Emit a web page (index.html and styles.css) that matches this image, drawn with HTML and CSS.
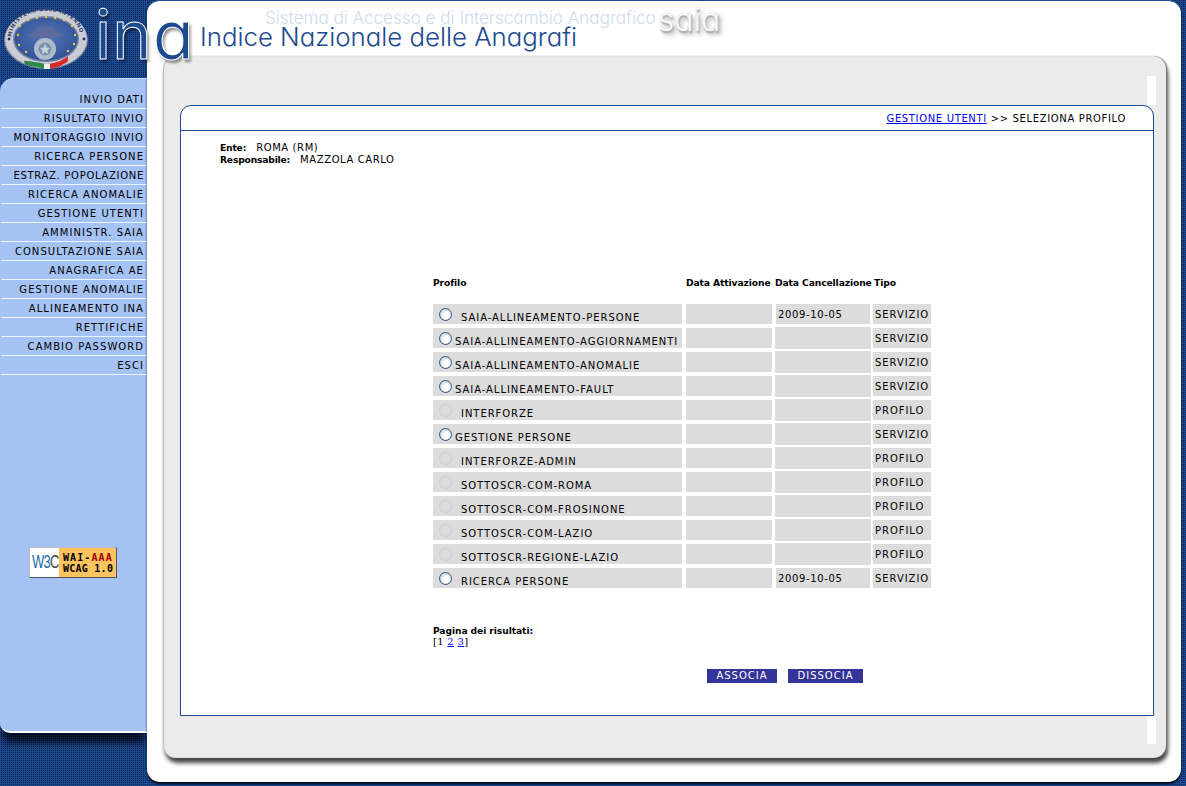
FILE: index.html
```html
<!DOCTYPE html>
<html lang="it">
<head>
<meta charset="utf-8">
<title>Indice Nazionale delle Anagrafi</title>
<link rel="stylesheet" href="styles.css">
</head>
<body>
<div class="page">
  <aside class="side">
    <nav class="menu">
      <a href="#">INVIO DATI</a>
      <a href="#">RISULTATO INVIO</a>
      <a href="#">MONITORAGGIO INVIO</a>
      <a href="#">RICERCA PERSONE</a>
      <a href="#" class="tight">ESTRAZ. POPOLAZIONE</a>
      <a href="#">RICERCA ANOMALIE</a>
      <a href="#">GESTIONE UTENTI</a>
      <a href="#">AMMINISTR. SAIA</a>
      <a href="#">CONSULTAZIONE SAIA</a>
      <a href="#">ANAGRAFICA AE</a>
      <a href="#">GESTIONE ANOMALIE</a>
      <a href="#">ALLINEAMENTO INA</a>
      <a href="#">RETTIFICHE</a>
      <a href="#">CAMBIO PASSWORD</a>
      <a href="#">ESCI</a>
    </nav>
    <div class="badge">
      <span class="badge-w3c"><span class="badge-mark">W3<i>C</i></span></span>
      <span class="badge-txt"><span class="l1">WAI-<b>AAA</b></span><span class="l2">WCAG 1.0</span></span>
    </div>
  </aside>
  <main class="panel">
    <header class="head">
      <div class="subtitle">Sistema di Accesso e di Interscambio Anagrafico<span class="saia">saia</span></div>
      <div class="title">Indice Nazionale delle Anagrafi</div>
    </header>
    <div class="grey">
      <div class="strip"></div>
      <div class="card-wrap">
        <section class="card">
          <div class="crumb"><a href="#">GESTIONE UTENTI</a> &gt;&gt; SELEZIONA PROFILO</div>
          <div class="info">
            <div><b>Ente:</b><span>ROMA (RM)</span></div>
            <div><b>Responsabile:</b><span>MAZZOLA CARLO</span></div>
          </div>
          <table class="tbl">
            <colgroup><col class="c1"><col class="c2"><col class="c3"><col class="c4"></colgroup>
            <thead>
              <tr><th>Profilo</th><th>Data Attivazione</th><th class="thc">Data Cancellazione</th><th>Tipo</th></tr>
            </thead>
            <tbody>
              <tr><td><div class="cell name wide"><input type="radio" name="p"><span>SAIA-ALLINEAMENTO-PERSONE</span></div></td><td><div class="cell"></div></td><td><div class="cell date">2009-10-05</div></td><td><div class="cell tipo">SERVIZIO</div></td></tr>
              <tr><td><div class="cell name"><input type="radio" name="p"><span>SAIA-ALLINEAMENTO-AGGIORNAMENTI</span></div></td><td><div class="cell"></div></td><td><div class="cell empty"></div></td><td><div class="cell tipo">SERVIZIO</div></td></tr>
              <tr><td><div class="cell name"><input type="radio" name="p"><span>SAIA-ALLINEAMENTO-ANOMALIE</span></div></td><td><div class="cell"></div></td><td><div class="cell empty"></div></td><td><div class="cell tipo">SERVIZIO</div></td></tr>
              <tr><td><div class="cell name"><input type="radio" name="p"><span>SAIA-ALLINEAMENTO-FAULT</span></div></td><td><div class="cell"></div></td><td><div class="cell empty"></div></td><td><div class="cell tipo">SERVIZIO</div></td></tr>
              <tr><td><div class="cell name wide"><input type="radio" name="p" disabled><span>INTERFORZE</span></div></td><td><div class="cell"></div></td><td><div class="cell empty"></div></td><td><div class="cell tipo">PROFILO</div></td></tr>
              <tr><td><div class="cell name"><input type="radio" name="p"><span>GESTIONE PERSONE</span></div></td><td><div class="cell"></div></td><td><div class="cell empty"></div></td><td><div class="cell tipo">SERVIZIO</div></td></tr>
              <tr><td><div class="cell name wide"><input type="radio" name="p" disabled><span>INTERFORZE-ADMIN</span></div></td><td><div class="cell"></div></td><td><div class="cell empty"></div></td><td><div class="cell tipo">PROFILO</div></td></tr>
              <tr><td><div class="cell name wide"><input type="radio" name="p" disabled><span>SOTTOSCR-COM-ROMA</span></div></td><td><div class="cell"></div></td><td><div class="cell empty"></div></td><td><div class="cell tipo">PROFILO</div></td></tr>
              <tr><td><div class="cell name wide"><input type="radio" name="p" disabled><span>SOTTOSCR-COM-FROSINONE</span></div></td><td><div class="cell"></div></td><td><div class="cell empty"></div></td><td><div class="cell tipo">PROFILO</div></td></tr>
              <tr><td><div class="cell name wide"><input type="radio" name="p" disabled><span>SOTTOSCR-COM-LAZIO</span></div></td><td><div class="cell"></div></td><td><div class="cell empty"></div></td><td><div class="cell tipo">PROFILO</div></td></tr>
              <tr><td><div class="cell name wide"><input type="radio" name="p" disabled><span>SOTTOSCR-REGIONE-LAZIO</span></div></td><td><div class="cell"></div></td><td><div class="cell empty"></div></td><td><div class="cell tipo">PROFILO</div></td></tr>
              <tr><td><div class="cell name wide"><input type="radio" name="p"><span>RICERCA PERSONE</span></div></td><td><div class="cell"></div></td><td><div class="cell date">2009-10-05</div></td><td><div class="cell tipo">SERVIZIO</div></td></tr>
            </tbody>
          </table>
          <div class="pager">
            <b>Pagina dei risultati:</b>
            <div class="pages">[1 <a href="#">2</a> <a href="#">3</a>]</div>
          </div>
          <div class="actions">
            <button type="button" class="btn assoc">ASSOCIA</button>
            <button type="button" class="btn dissoc">DISSOCIA</button>
          </div>
        </section>
      </div>
    </div>
  </main>
  <div class="logo">
    <svg class="emblem" width="86" height="70" viewBox="0 0 86 70" aria-hidden="true">
      <defs>
        <path id="ring" d="M7 36 C8 16 24 7 42 7 C60 7 76 16 77 36"/>
        <radialGradient id="field" cx="50%" cy="45%" r="60%">
          <stop offset="0" stop-color="#5577b5"/><stop offset="1" stop-color="#2f4f96"/>
        </radialGradient>
      </defs>
      <ellipse cx="42" cy="36" rx="42" ry="29" fill="#7f87a0"/>
      <ellipse cx="42" cy="35" rx="41" ry="29" fill="#c9ccd4"/>
      <ellipse cx="42" cy="35" rx="33" ry="23" fill="#6f7da3"/>
      <ellipse cx="42" cy="35" rx="31.5" ry="21.5" fill="url(#field)"/>
      <text class="ring-text"><textPath href="#ring" startOffset="3">MINISTERO DELL'INTERNO</textPath></text>
      <path d="M24 31 L32 27 L34 23 L48 22 L51 27 L59 31 L52 34 L31 34Z" fill="#5c6b9e"/>
      <circle cx="41" cy="45" r="11" fill="#aebccb"/>
      <circle cx="41" cy="45" r="6.5" fill="#7d93ad"/>
      <path d="M41 40 l1.5 3.5 3.5 .4 -2.6 2.4 .8 3.6 -3.2 -1.9 -3.2 1.9 .8 -3.6 -2.6 -2.4 3.5 -.4Z" fill="#c6d3dc"/>
      <g fill="#e8c93a">
        <circle cx="14" cy="31" r="1.2"/><circle cx="16" cy="22" r="1.2"/><circle cx="24" cy="16" r="1.2"/>
        <circle cx="33" cy="14" r="1.2"/><circle cx="42" cy="13" r="1.2"/><circle cx="51" cy="14" r="1.2"/>
        <circle cx="60" cy="16" r="1.2"/><circle cx="68" cy="22" r="1.2"/><circle cx="71" cy="31" r="1.2"/>
        <circle cx="70" cy="40" r="1.2"/><circle cx="15" cy="41" r="1.2"/><circle cx="22" cy="48" r="1.2"/><circle cx="64" cy="47" r="1.2"/>
      </g>
      <g fill="#1d2f6e"><circle cx="5" cy="35" r="1.4"/><circle cx="80" cy="35" r="1.4"/></g>
      <path d="M20 57 C28 57 36 59 41 60 L42 65 C34 63 26 62 21 61Z" fill="#2f8a4a"/>
      <path d="M44 60 C52 59 60 56 64 52 L64 57 C60 61 52 64 45 65Z" fill="#d62b2b"/>
      <path d="M40 60 L46 60 L46 65 L40 65Z" fill="#f2f2f2"/>
    </svg>
    <span class="ina">ina</span>
  </div>
</div>
</body>
</html>
```
FILE: styles.css
```css
* { box-sizing: border-box; }
html, body { margin: 0; height: 100%; }
body {
  overflow: hidden;
  font-family: "DejaVu Sans", Verdana, sans-serif;
  font-size: 10px;
  color: #000;
  background: conic-gradient(#0a2350 25%, #1c4a90 0) 0 0 / 2px 2px;
}
.page {
  position: relative;
  width: 1186px;
  height: 786px;
  display: grid;
  grid-template-columns: 147px 1034px;
  align-items: start;
}

/* sidebar */
.side {
  margin-top: 78px;
  height: 655px;
  background: #a4c2f4;
  border-top: 1px solid #c8dafa;
  border-bottom: 2px solid #fff;
  border-radius: 14px 0 0 10px;
  padding-top: 11px;
  box-shadow: 0 12px 8px -2px rgba(0, 0, 10, .75);
}
.menu { display: flex; flex-direction: column; margin-left: 1px; }
.menu a {
  height: 19px;
  padding-right: 3px;
  border-bottom: 1px solid #eef4ff;
  text-align: right;
  color: #000;
  line-height: 20px;
  letter-spacing: 1.05px;
  text-decoration: none;
}
.menu a.tight { letter-spacing: .7px; }
.badge {
  display: flex;
  width: 88px;
  height: 31px;
  margin: 172px 0 0 29px;
  border: 1px solid;
  border-color: #bbb #555 #555 #bbb;
  font-family: "DejaVu Sans Mono", monospace;
  font-weight: 700;
}
.badge-w3c { width: 29px; flex: none; overflow: hidden; background: #fff; padding-left: 2px; }
.badge-mark {
  display: inline-block;
  color: #1a6cb0;
  font: 400 18px/28px "Liberation Sans", sans-serif;
  letter-spacing: -1px;
  transform: scaleX(.72);
  transform-origin: left center;
}
.badge-mark i { font-style: normal; color: #444; }
.badge-txt {
  flex: 1;
  display: flex;
  flex-direction: column;
  justify-content: center;
  padding-left: 4px;
  background: #fcc45f;
  font-size: 10px;
  line-height: 11px;
}
.l1 { letter-spacing: 1.1px; }
.l2 { letter-spacing: .25px; }
.badge-txt b { color: #a80000; }

/* main panel */
.panel {
  height: 782px;
  background: #fff;
  border-top: 1px solid #1c4a90;
  border-radius: 13px;
  padding: 0 15px 0 16px;
  box-shadow: 0 2px 2px rgba(0, 0, 10, .9);
}
.head {
  height: 55px;
  color: #1c4a90;
  font-family: "Inter", sans-serif;
  font-feature-settings: "cv11";
}
.subtitle {
  height: 24px;
  padding-left: 102px;
  color: #d0daec;
  font-size: 17.1px;
  font-weight: 300;
  line-height: 26px;
  white-space: nowrap;
}
.saia {
  position: relative;
  top: 7px;
  margin-left: 2px;
  font-size: 32px;
  line-height: 24px;
  color: #fff;
  text-shadow: 1px 2px 2px #999, 3px 4px 4px #aaa;
  -webkit-text-stroke: .4px #ddd;
}
.title {
  padding-left: 37px;
  font-size: 25.8px;
  font-weight: 300;
  line-height: 24px;
  white-space: nowrap;
}
.grey {
  position: relative;
  height: 702px;
  background: #ebebeb;
  border-radius: 13px;
  padding: 49px 10px 0 17px;
  box-shadow: inset 1px 0 1px #bbb, 1px 0 1px #777, 2px 5px 4px #444;
}
.strip {
  position: absolute;
  top: 20px;
  left: 984px;
  width: 9px;
  height: 668px;
  background: #fff;
}
.card-wrap { position: relative; background: #ebebeb; padding-right: 2px; }
.card {
  height: 611px;
  background: #fff;
  border: 1px solid #1c4a90;
  border-radius: 11px 11px 0 0;
}
.crumb {
  height: 25px;
  padding-right: 27px;
  border-bottom: 1px solid #1c4a90;
  text-align: right;
  line-height: 26px;
  letter-spacing: .65px;
}
.crumb a, .pages a { color: #00e; }
.info { padding: 11px 0 0 39px; line-height: 12px; letter-spacing: .6px; }
.info b { font-size: 9.2px; letter-spacing: -.2px; margin-right: 10px; }
.tbl {
  margin: 110px 0 0 250px;
  border-collapse: separate;
  border-spacing: 0;
  table-layout: fixed;
  width: 502px;
}
.c1 { width: 253px; } .c2 { width: 90px; } .c3 { width: 98px; } .c4 { width: 61px; }
.tbl th {
  height: 26px;
  padding: 0 0 0 2px;
  text-align: left;
  font-size: 9.2px;
  letter-spacing: -.12px;
  white-space: nowrap;
  vertical-align: top;
  line-height: 14px;
}
.tbl th.thc { padding-left: 1px; }
.tbl td { padding: 0; height: 24px; }
.cell {
  height: 20px;
  margin: 2px;
  background: #dcdcdc;
  letter-spacing: .95px;
  line-height: 21px;
  white-space: nowrap;
}
.date { padding-left: 2px; letter-spacing: .65px; }
.empty { height: 22px; margin: 1px; }
.tipo { margin: 2px 2px 2px 1px; padding-left: 2px; letter-spacing: .95px; }
.name { display: flex; align-items: flex-start; padding-left: 6px; overflow: visible; }
.name span { margin: 3px 0 0 3px; }
.name.wide span { margin-left: 9px; }
.name input {
  appearance: none;
  width: 13px;
  height: 13px;
  margin: 4px 0 0;
  border: 1px solid #2b5a92;
  border-radius: 50%;
  background: radial-gradient(circle at 65% 65%, #fff 30%, #cfd6de 85%);
  box-shadow: inset 0 0 1px #6b8cb0;
  flex: none;
}
.name input:disabled { border-color: #cfcfc8; background: #dcdcdc; box-shadow: none; }
.pager { margin: 36px 0 0 252px; line-height: 11px; font-size: 9.1px; letter-spacing: -.05px; }
.pages { margin-top: -1px; font-family: "DejaVu Serif", serif; font-size: 10px; letter-spacing: .3px; }
.actions { display: flex; gap: 11px; margin: 22px 0 0 526px; }
.btn {
  height: 14px;
  padding: 0;
  border: 0;
  background: #333399;
  color: #fff;
  font: 10px/14px "DejaVu Sans", sans-serif;
  letter-spacing: 1px;
}
.assoc { width: 70px; }
.dissoc { width: 75px; }

/* logo overlay */
.logo { position: absolute; top: 4px; left: 4px; }
.emblem { position: absolute; top: 0; left: 0; }
.ring-text { font: 700 5.4px "DejaVu Sans", sans-serif; fill: #3a4570; letter-spacing: .55px; }
.ina {
  position: absolute;
  top: -14px;
  left: 91px;
  color: #1c4a90;
  font: 400 67px/90px "Inter", sans-serif;
  font-feature-settings: "cv11";
  letter-spacing: 1px;
  -webkit-text-stroke: 1px #fff;
  text-shadow: 2px 3px 3px rgba(0, 0, 0, .45);
}
```
